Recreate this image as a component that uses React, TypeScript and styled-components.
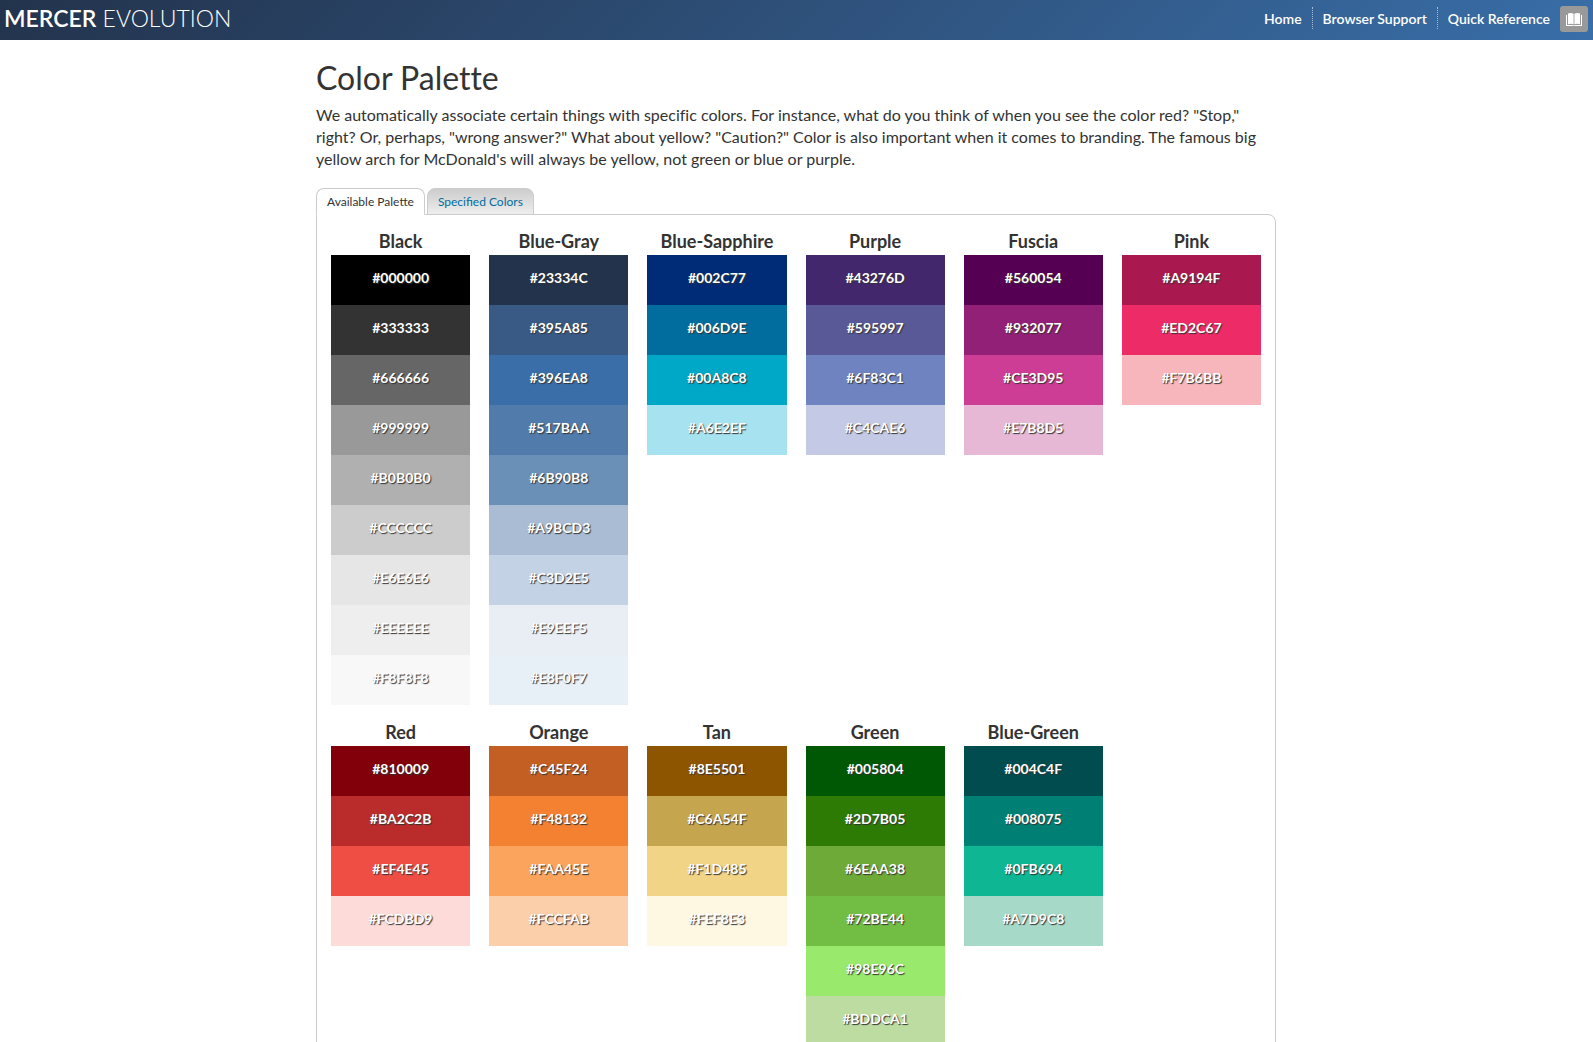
import React, { useState } from "react";
import styled, { createGlobalStyle } from "styled-components";

const GlobalStyle = createGlobalStyle`
  * { box-sizing: border-box; }
  body {
    margin: 0;
    background: #fff;
    color: #333;
    font-family: Lato, "Open Sans", sans-serif;
    font-size: 16px;
    line-height: 22px;
    font-variant-ligatures: none;
  }
`;

const Header = styled.header`
  display: flex;
  align-items: center;
  justify-content: space-between;
  height: 40px;
  padding: 0 5px 2px 4px;
  background: linear-gradient(135deg, #23334c 0%, #396ea8 100%);
  color: #fff;
`;

const Brand = styled.a`
  padding-bottom: 2px;
  color: #fff;
  font-size: 23px;
  font-weight: 300;
  line-height: 36px;
  text-decoration: none;
  text-transform: uppercase;
`;

const BrandStrong = styled.strong`
  font-weight: 600;
`;

const Nav = styled.nav`
  display: flex;
  align-items: center;
`;

const NavList = styled.ul`
  display: flex;
  margin: 0;
  padding: 0 0 2px;
  list-style: none;
`;

const NavItem = styled.li`
  padding: 0 10px;
  line-height: 21px;

  & + & {
    border-left: 1px dotted #a9bcd3;
  }
`;

const NavLink = styled.a`
  color: #fff;
  font-size: 14px;
  font-weight: 600;
  text-decoration: none;
`;

const IconButton = styled.button`
  display: flex;
  align-items: center;
  justify-content: center;
  width: 28px;
  height: 26px;
  padding: 0;
  border: 0;
  border-radius: 3px;
  background: #999;
  color: #fff;
  cursor: pointer;
`;

const Main = styled.main`
  max-width: 961px;
  margin: 0 auto;
  padding: 19px 1px 0 0;
`;

const Title = styled.h1`
  margin: 0 0 7px;
  font-size: 32px;
  font-weight: 400;
  line-height: 38px;
`;

const Intro = styled.p`
  margin: 0 0 18px;
`;

const TabList = styled.div`
  display: flex;
  gap: 2px;
`;

const Tab = styled.button<{ $active: boolean }>`
  height: 27px;
  margin-bottom: -1px;
  padding: 0 10px;
  border: 1px solid #ccc;
  border-bottom-color: ${(p) => (p.$active ? "#fff" : "#ccc")};
  border-radius: 8px 8px 0 0;
  background: ${(p) => (p.$active ? "#fff" : "linear-gradient(#ccc, #eee)")};
  color: ${(p) => (p.$active ? "#333" : "#006d9e")};
  font: 12px/24px Lato, "Open Sans", sans-serif;
  cursor: pointer;
`;

const Panel = styled.section`
  padding: 14px;
  border: 1px solid #ccc;
  border-radius: 0 8px 8px 8px;
`;

const PaletteRow = styled.div`
  display: grid;
  grid-template-columns: repeat(6, 1fr);
  gap: 19px;
  align-items: start;

  & + & {
    margin-top: 15px;
  }
`;

const ColorName = styled.h2`
  margin: 0;
  padding-bottom: 2px;
  font-size: 18px;
  font-weight: 700;
  line-height: 24px;
  text-align: center;
`;

const SwatchList = styled.ul`
  margin: 0;
  padding: 0;
  list-style: none;
`;

const Swatch = styled.li<{ $color: string }>`
  height: 50px;
  background: ${(p) => p.$color};
  color: #fff;
  font-size: 14px;
  font-weight: 700;
  line-height: 46px;
  text-align: center;
  text-shadow: 1px 1px 1px #333;
`;

type Family = { name: string; colors: string[] };

const rows: Family[][] = [
  [
    { name: "Black", colors: ["#000000", "#333333", "#666666", "#999999", "#B0B0B0", "#CCCCCC", "#E6E6E6", "#EEEEEE", "#F8F8F8"] },
    { name: "Blue-Gray", colors: ["#23334C", "#395A85", "#396EA8", "#517BAA", "#6B90B8", "#A9BCD3", "#C3D2E5", "#E9EEF5", "#E8F0F7"] },
    { name: "Blue-Sapphire", colors: ["#002C77", "#006D9E", "#00A8C8", "#A6E2EF"] },
    { name: "Purple", colors: ["#43276D", "#595997", "#6F83C1", "#C4CAE6"] },
    { name: "Fuscia", colors: ["#560054", "#932077", "#CE3D95", "#E7B8D5"] },
    { name: "Pink", colors: ["#A9194F", "#ED2C67", "#F7B6BB"] },
  ],
  [
    { name: "Red", colors: ["#810009", "#BA2C2B", "#EF4E45", "#FCDBD9"] },
    { name: "Orange", colors: ["#C45F24", "#F48132", "#FAA45E", "#FCCFAB"] },
    { name: "Tan", colors: ["#8E5501", "#C6A54F", "#F1D485", "#FEF8E3"] },
    { name: "Green", colors: ["#005804", "#2D7B05", "#6EAA38", "#72BE44", "#98E96C", "#BDDCA1"] },
    { name: "Blue-Green", colors: ["#004C4F", "#008075", "#0FB694", "#A7D9C8"] },
  ],
];

const tabs = ["Available Palette", "Specified Colors"];
const links = ["Home", "Browser Support", "Quick Reference"];

const BookIcon = () => (
  <svg width="16" height="13" viewBox="0 0 16 13" fill="currentColor" aria-hidden="true">
    <path d="M2 .6C3.600-.1 6.200-.1 7.600.7v10.500C6.200 10.500 3.600 10.500 2 11.200z" />
    <path d="M14 .6C12.400-.1 9.800-.1 8.400.7v10.500c1.400-.7 4-.7 5.600 0z" />
    <path d="M0 2h1v10h5.800c.4.500 2 .5 2.400 0H15V2h1v11H0z" />
  </svg>
);

export default function App() {
  const [active, setActive] = useState(0);

  return (
    <>
      <GlobalStyle />
      <Header>
        <Brand href="#">
          <BrandStrong>Mercer</BrandStrong> Evolution
        </Brand>
        <Nav aria-label="Main">
          <NavList>
            {links.map((link) => (
              <NavItem key={link}>
                <NavLink href="#">{link}</NavLink>
              </NavItem>
            ))}
          </NavList>
          <IconButton type="button" aria-label="Documentation">
            <BookIcon />
          </IconButton>
        </Nav>
      </Header>
      <Main>
        <Title>Color Palette</Title>
        <Intro>
          We automatically associate certain things with specific colors. For instance, what do you
          think of when you see the color red? "Stop," right? Or, perhaps, "wrong answer?" What about
          yellow? "Caution?" Color is also important when it comes to branding. The famous big yellow
          arch for McDonald's will always be yellow, not green or blue or purple.
        </Intro>
        <TabList role="tablist">
          {tabs.map((tab, i) => (
            <Tab key={tab} type="button" role="tab" aria-selected={i === active} $active={i === active} onClick={() => setActive(i)}>
              {tab}
            </Tab>
          ))}
        </TabList>
        <Panel role="tabpanel">
          {rows.map((families, i) => (
            <PaletteRow key={i}>
              {families.map((family) => (
                <div key={family.name}>
                  <ColorName>{family.name}</ColorName>
                  <SwatchList>
                    {family.colors.map((color) => (
                      <Swatch key={color} $color={color}>
                        {color}
                      </Swatch>
                    ))}
                  </SwatchList>
                </div>
              ))}
            </PaletteRow>
          ))}
        </Panel>
      </Main>
    </>
  );
}
